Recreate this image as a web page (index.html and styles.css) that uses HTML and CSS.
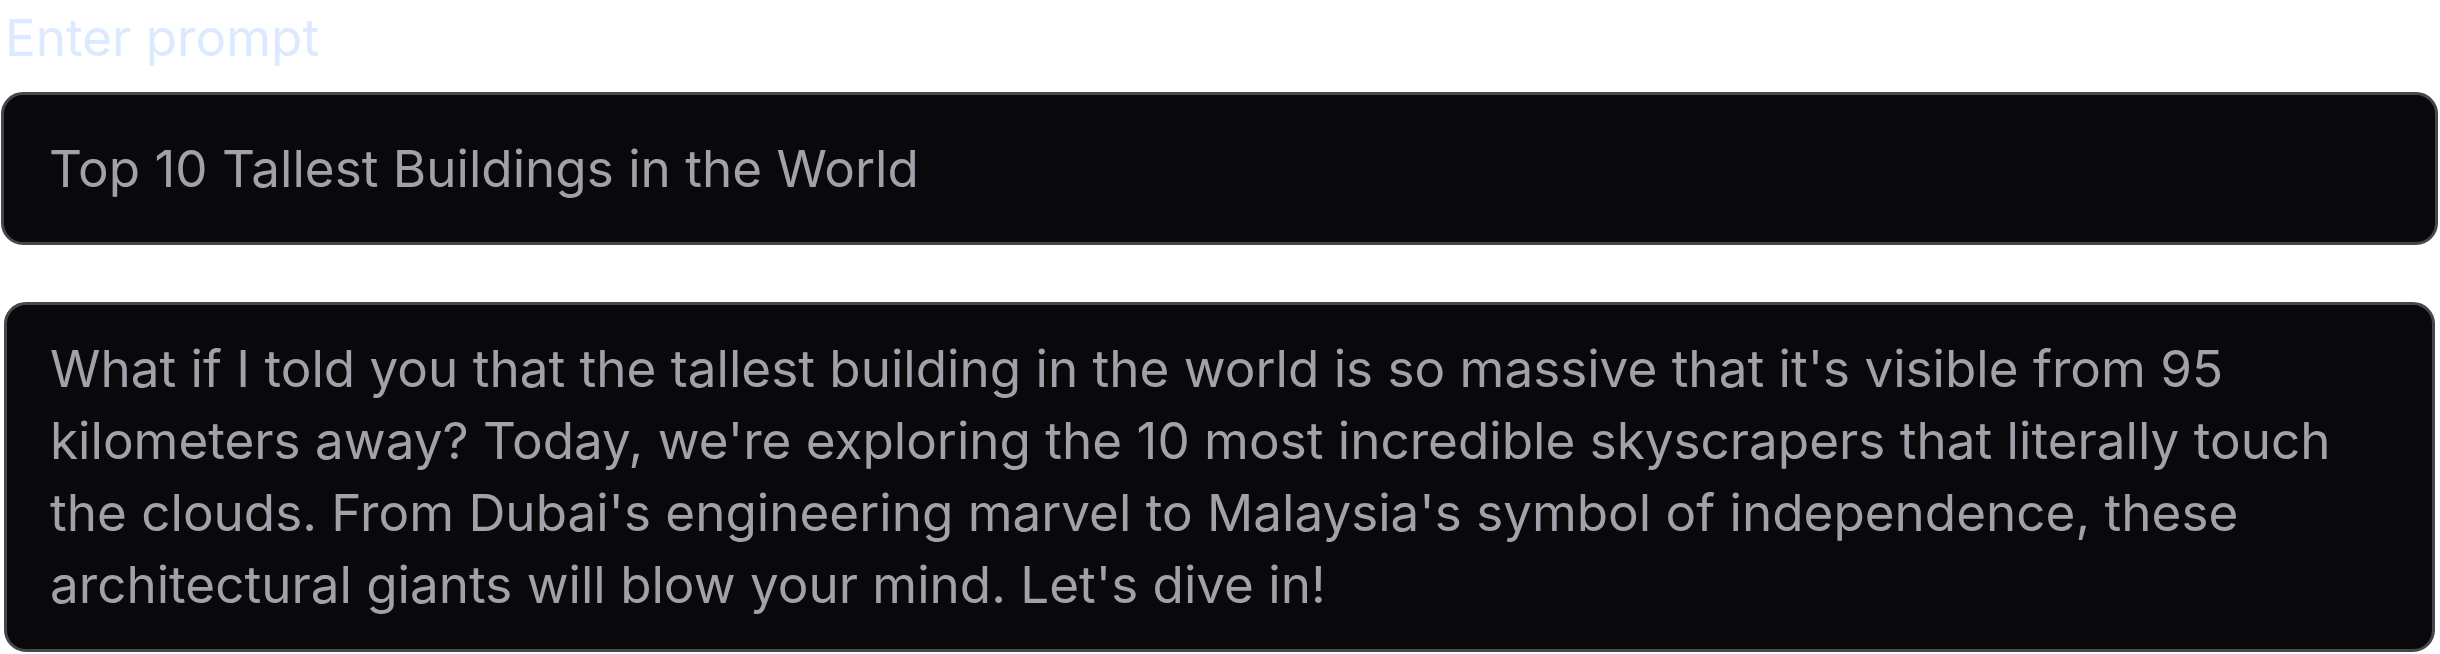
FILE: index.html
```html
<!DOCTYPE html>
<html lang="en">
<head>
<meta charset="utf-8">
<title>Enter prompt</title>
<link rel="stylesheet" href="styles.css">
</head>
<body>
<main class="page">
  <label class="label">Enter prompt</label>
  <div class="field field-title">Top 10 Tallest Buildings in the World</div>
  <div class="field field-body">What if I told you that the tallest building in the world is so massive that it's visible from 95 kilometers away? Today, we're exploring the 10 most incredible skyscrapers that literally touch the clouds. From Dubai's engineering marvel to Malaysia's symbol of independence, these architectural giants will blow your mind. Let's dive in!</div>
</main>
</body>
</html>
```

FILE: styles.css
```css
html, body {
  margin: 0;
  padding: 0;
  background: #ffffff;
}

.page {
  display: flex;
  flex-direction: column;
  padding: 1px 2px 0 1px;
  font-family: Inter, "Liberation Sans", sans-serif;
  font-size: 51.2px;
  line-height: 72px;
}

.label {
  display: block;
  color: #dbeafe;
  padding-left: 4px;
  margin-bottom: 19px;
}

.field {
  background: #09090b;
  border: 3px solid #46464d;
  border-radius: 22px;
  color: #a1a1aa;
}

.field-title {
  padding: 37px 45px 38px 45px;
  white-space: nowrap;
}

.field-body {
  margin: 57px 3px 0 3px;
  padding: 27px 43px 29px 43px;
}
```
